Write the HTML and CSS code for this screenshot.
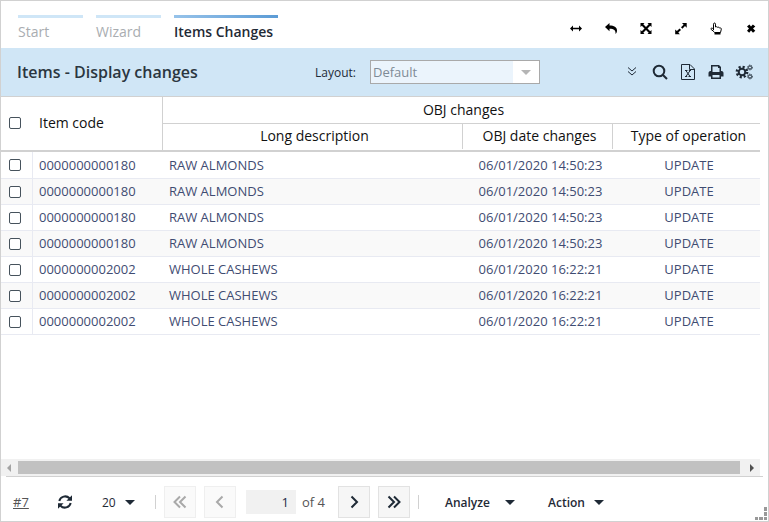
FILE: index.html
```html
<!DOCTYPE html>
<html lang="en">
<head>
<meta charset="utf-8">
<title>Items Changes</title>
<link rel="stylesheet" href="styles.css">
</head>
<body>
<main class="window">
  <header class="topbar">
    <nav class="tabs">
      <a class="tab" href="#start">Start</a>
      <a class="tab" href="#wizard">Wizard</a>
      <a class="tab active" href="#items">Items Changes</a>
    </nav>
    <div class="window-tools">
      <button aria-label="Fit width"><svg width="14" height="14" viewBox="0 0 14 14"><path d="M1 6.500l3-3v2.300h6V3.500l3 3-3 3V7.200H4v2.300z"/></svg></button>
      <button aria-label="Back"><svg width="14" height="14" viewBox="0 0 14 14"><path d="M1 5L5.500 1v2.500C10 3.500 13 5 13 8.500c0 1.500-.5 2.700-1.500 3.500C12 8.500 10 6.700 5.500 6.700v2.500z"/></svg></button>
      <button aria-label="Maximize"><svg width="14" height="14" viewBox="0 0 14 14"><path d="M1.500 1h4L4.300 2.300 7 5l2.700-2.700L8.500 1h4v4l-1.300-1.200L8.500 6.500l2.700 2.700 1.300-1.200v4h-4l1.200-1.300L7 8l-2.700 2.700L5.500 12h-4V8l1.300 1.200 2.700-2.700-2.700-2.700L1.500 5z"/></svg></button>
      <button aria-label="Expand"><svg width="14" height="14" viewBox="0 0 14 14"><path d="M8 1h4.700v4.700L11 4.100 8.400 6.700 7 5.300l2.600-2.600zM1.200 12.200V7.500l1.700 1.600 2.700-2.600L7 7.900l-2.700 2.600 1.600 1.700z"/></svg></button>
      <button aria-label="Pointer"><svg class="line" width="14" height="14" viewBox="0 0 14 14"><path d="M4.500 8V2.200c0-1.600 2-1.600 2 0V5c1.400-.6 2-.1 2.200.4 1-.5 1.600 0 1.800.6 1.200-.4 1.800.2 1.800 1.200 0 1.400-.8 2.200-.8 3.300H5.600C5.200 9.500 2.900 8.200 2.100 7.400 1.400 6 3 5.600 4.500 7"/><path d="M5.500 11.500h6" stroke-width="2"/></svg></button>
      <button aria-label="Close"><svg width="14" height="14" viewBox="0 0 14 14"><path d="M3 4.400L5.400 2.500 7 4.600 8.900 2.500 11.300 4.400 9 6.500 11.300 8.700 9 10.800 7 8.600 5.200 10.800 3 8.700 5 6.500z"/></svg></button>
    </div>
  </header>

  <section class="titlebar">
    <h1>Items - Display changes</h1>
    <label for="layout">Layout:</label>
    <div class="select-box">
      <select id="layout" disabled><option>Default</option></select>
      <span class="select-arrow"><i class="caret"></i></span>
    </div>
    <div class="tools">
      <button aria-label="More"><svg class="line" width="18" height="18" viewBox="0 0 18 18"><path d="M5 4.500L9 8l4-3.500M5 8.500L9 12l4-3.500"/></svg></button>
      <button aria-label="Search"><svg class="heavy" width="18" height="18" viewBox="0 0 18 18"><circle cx="8" cy="8" r="5.300"/><path d="M11.700 11.700l4.300 4.300"/></svg></button>
      <button aria-label="Export to spreadsheet"><svg class="line" width="18" height="18" viewBox="0 0 18 18"><path d="M2.500 1.500h8.500l4.500 4.500v10.500h-13zM10.500 1.500v5h5M6 7.500h2.500M9.800 7.500h2.200M6 13.500h2.200M9.500 13.500H12M6.800 7.500l4.300 6M11.200 7.500l-4.300 6"/></svg></button>
      <button aria-label="Print"><svg width="18" height="18" viewBox="0 0 18 18"><path fill-rule="evenodd" d="M4 2h8l2 2v4h.5C15.500 8 16.500 8.800 16.500 10v3.500H14V16H4v-2.500H1.500V10c0-1.200 1-2 2-2H4zM5.500 3.500V9h7V5H11V3.500zM5.500 12v2.500h7V12z"/></svg></button>
      <button aria-label="Settings"><svg class="gears" width="18" height="18" viewBox="0 0 18 18"><circle class="teeth" cx="7" cy="9" r="4.900"/><circle class="ring" cx="7" cy="9" r="3.300"/><circle class="small-teeth" cx="15" cy="4.500" r="2.400"/><circle class="small" cx="15" cy="4.500" r="1.600"/><circle class="small-teeth" cx="15" cy="13.500" r="2.400"/><circle class="small" cx="15" cy="13.500" r="1.600"/></svg></button>
    </div>
  </section>

  <section class="grid">
    <table>
      <colgroup><col class="c-check"><col class="c-code"><col><col class="c-date"><col class="c-type"></colgroup>
      <thead>
        <tr>
          <th class="check" rowspan="2"><input type="checkbox" aria-label="Select all"></th>
          <th class="code" rowspan="2">Item code</th>
          <th class="group" colspan="3">OBJ changes</th>
        </tr>
        <tr class="sub"><th><span>Long description</span></th><th><span>OBJ date changes</span></th><th><span>Type of operation</span></th></tr>
      </thead>
      <tbody>
        <tr><td class="check"><input type="checkbox" aria-label="Select row 1"></td><td>0000000000180</td><td>RAW ALMONDS</td><td class="mid">06/01/2020 14:50:23</td><td class="mid">UPDATE</td></tr>
        <tr><td class="check"><input type="checkbox" aria-label="Select row 2"></td><td>0000000000180</td><td>RAW ALMONDS</td><td class="mid">06/01/2020 14:50:23</td><td class="mid">UPDATE</td></tr>
        <tr><td class="check"><input type="checkbox" aria-label="Select row 3"></td><td>0000000000180</td><td>RAW ALMONDS</td><td class="mid">06/01/2020 14:50:23</td><td class="mid">UPDATE</td></tr>
        <tr><td class="check"><input type="checkbox" aria-label="Select row 4"></td><td>0000000000180</td><td>RAW ALMONDS</td><td class="mid">06/01/2020 14:50:23</td><td class="mid">UPDATE</td></tr>
        <tr><td class="check"><input type="checkbox" aria-label="Select row 5"></td><td>0000000002002</td><td>WHOLE CASHEWS</td><td class="mid">06/01/2020 16:22:21</td><td class="mid">UPDATE</td></tr>
        <tr><td class="check"><input type="checkbox" aria-label="Select row 6"></td><td>0000000002002</td><td>WHOLE CASHEWS</td><td class="mid">06/01/2020 16:22:21</td><td class="mid">UPDATE</td></tr>
        <tr><td class="check"><input type="checkbox" aria-label="Select row 7"></td><td>0000000002002</td><td>WHOLE CASHEWS</td><td class="mid">06/01/2020 16:22:21</td><td class="mid">UPDATE</td></tr>
      </tbody>
    </table>
  </section>

  <div class="scrollbar">
    <svg class="dim" width="17" height="17" viewBox="0 0 17 17"><path d="M10 5v8L6 9z"/></svg>
    <div class="thumb"></div>
    <svg width="20" height="17" viewBox="0 0 20 17"><path d="M10 5v8l4-4z"/></svg>
  </div>

  <footer class="pager">
    <a class="count" href="#rows">#7</a>
    <button class="refresh" aria-label="Refresh"><svg width="16" height="16" viewBox="0 0 16 16"><path class="arc" d="M2.300 7A6 6 0 0 1 12.500 4.300M13.700 9A6 6 0 0 1 3.500 11.700"/><path d="M15 1.200v5.600H9.400zM1 14.800V9.200h5.600z"/></svg></button>
    <button class="menu size">20<i class="caret"></i></button>
    <span class="sep"></span>
    <div class="pages">
      <button class="page" disabled aria-label="First page"><svg width="20" height="20" viewBox="0 0 20 20"><path d="M10 4.500L4.500 10l5.500 5.500M15.500 4.500L10 10l5.500 5.500"/></svg></button>
      <button class="page" disabled aria-label="Previous page"><svg width="20" height="20" viewBox="0 0 20 20"><path d="M12.500 4.500L7 10l5.500 5.500"/></svg></button>
      <div class="current"><input id="page" type="text" value="1"><label for="page">of 4</label></div>
      <button class="page" aria-label="Next page"><svg width="20" height="20" viewBox="0 0 20 20"><path d="M7.500 4.500L13 10l-5.500 5.500"/></svg></button>
      <button class="page" aria-label="Last page"><svg width="20" height="20" viewBox="0 0 20 20"><path d="M4.500 4.500L10 10l-5.500 5.500M10 4.500l5.500 5.500-5.500 5.500"/></svg></button>
    </div>
    <span class="sep"></span>
    <button class="menu analyze">Analyze<i class="caret"></i></button>
    <button class="menu action">Action<i class="caret"></i></button>
  </footer>
  <svg class="grip" width="14" height="14" viewBox="0 0 14 14"><path d="M10 0h3v4h-3zM10 5h3v4h-3zM10 10h3v3h-3zM5 10h4v3H5zM1 10h3v3H1z"/></svg>
</main>
</body>
</html>
```

FILE: styles.css
```css
* { box-sizing: border-box; }

body {
  margin: 0;
  font-family: "Open Sans", "Noto Sans", sans-serif;
  font-size: 13px;
  color: #1f2a36;
}

button {
  padding: 0;
  border: 0;
  background: none;
  font: inherit;
  color: inherit;
}

svg { display: block; fill: currentColor; }

.window {
  position: relative;
  display: flex;
  flex-direction: column;
  min-height: 100vh;
  border: 1px solid #d1d1d1;
  background: #fff;
}

.topbar {
  display: flex;
  justify-content: space-between;
  height: 47px;
  padding: 14px 10px 0 17px;
}

.tabs { display: flex; gap: 13px; }

.tab {
  min-width: 65px;
  height: 28px;
  border-top: 3px solid #cfe6f7;
  font-size: 14px;
  line-height: 28px;
  color: #a9adb1;
  text-decoration: none;
}

.tab.active {
  min-width: 104px;
  border-image: linear-gradient(90deg, #97c3ea, #5b9bd5) 1;
  font-weight: 600;
  color: #1f2a36;
}

.window-tools { display: flex; gap: 21px; height: 27px; align-items: center; color: #000; }

.line { fill: none; stroke: currentColor; stroke-width: 1; }
.heavy { fill: none; stroke: currentColor; stroke-width: 2; }

.titlebar {
  display: flex;
  align-items: center;
  height: 49px;
  padding: 0 15px 0 16px;
  border-bottom: 1px solid #d1d1d1;
  background: #d0e6f6;
}

.titlebar h1 {
  flex: 0 1 298px;
  margin: 0;
  font-size: 16px;
  font-weight: 600;
  color: #2b3640;
}

.titlebar label { font-size: 12px; margin-right: 14px; }

.select-box {
  display: flex;
  width: 170px;
  height: 24px;
  border: 1px solid #a9a9a9;
  background: #ebf4fc;
}

.select-box select {
  flex: 1;
  appearance: none;
  padding: 0 2px;
  border: 0;
  background: none;
  font: inherit;
  color: #7f8b96;
  opacity: 1;
}

.select-arrow {
  display: flex;
  align-items: center;
  justify-content: center;
  width: 26px;
  background: #fff;
  color: #b5b5b5;
}

.caret {
  border: 5px solid transparent;
  border-top-color: currentColor;
  border-bottom: 0;
}

.tools { display: flex; gap: 10px; margin-left: auto; }

.gears circle { fill: none; stroke: currentColor; }
.gears .teeth { stroke-width: 3; stroke-dasharray: 2 1.848; }
.gears .ring { stroke-width: 2; }
.gears .small-teeth { stroke-width: 1; stroke-dasharray: 1 .885; }
.gears .small { stroke-width: 1; }

.grid { flex: 1; padding-right: 8px; }

table {
  width: 100%;
  table-layout: fixed;
  border-spacing: 0;
}

.c-check { width: 32px; }
.c-code { width: 130px; }
.c-date { width: 150px; }
.c-type { width: 147px; }

th {
  padding: 0 0 0 4px;
  font-size: 14px;
  font-weight: 400;
  line-height: 20px;
  color: #111;
}

th.check, th.code { padding-bottom: 2px; border-bottom: 2px solid #d1d1d1; }
th.code { padding-left: 6px; border-right: 1px solid #d1d1d1; text-align: left; }
th.group { height: 27px; border-bottom: 1px solid #d1d1d1; }

.sub th { height: 28px; padding-bottom: 1px; border-bottom: 2px solid #d1d1d1; }
.sub span { display: block; padding: 1px 0 3px; border-right: 1px solid #d1d1d1; line-height: 21px; }
.sub th:last-child span { border-right: 0; }

td {
  height: 26px;
  padding: 0 6px 2px;
  border-bottom: 1px solid #e8eaf2;
  line-height: 20px;
  color: #3f4c72;
}

tbody tr:first-child td { height: 27px; padding-bottom: 0; }
tbody tr:nth-child(even) { background: #f9f9f9; }

.check, td.check { padding: 0 0 0 8px; text-align: left; }
td.check { border-right: 1px solid #e8eaf2; }
td.mid { padding-left: 11px; text-align: center; }

input[type="checkbox"] {
  display: block;
  appearance: none;
  width: 12px;
  height: 12px;
  margin: 0;
  border: 1px solid #46525c;
  border-radius: 2px;
  background: #fff;
}

.scrollbar {
  display: flex;
  height: 17px;
  margin-right: 8px;
  background: #f1f1f1;
  color: #505050;
}

.scrollbar .dim { color: #a3a3a3; }
.thumb { flex: 1; margin: 2px 0; background: #c1c1c1; }

.pager {
  display: flex;
  align-items: center;
  height: 45px;
  margin: 0 5px;
  padding: 6px 7px 0;
  border-top: 1px solid #d1d1d1;
  font-size: 12px;
}

.count { width: 44px; font-size: 13px; color: #555; }
.refresh { width: 45px; }
.arc { fill: none; stroke: currentColor; stroke-width: 2; }

.menu { display: flex; align-items: center; justify-content: space-between; font-weight: 600; }
.size { width: 33px; margin-right: 20px; font-weight: 500; }

.sep { width: 1px; height: 14px; background: #d1d1d1; }

.pages { display: flex; align-items: center; gap: 8px; padding: 0 8px; }

.page {
  display: grid;
  place-items: center;
  width: 32px;
  height: 32px;
  border: 1px solid #e2e2e2;
  background: #f6f6f6;
}

.page svg { fill: none; stroke: currentColor; stroke-width: 2; }
.page:disabled { border-color: #efefef; background: #fafafa; color: #a9a9a9; }

.current { display: flex; align-items: center; width: 84px; margin: 0 0 0 2px; gap: 6px; }
.current input {
  width: 50px;
  height: 24px;
  padding: 0 7px;
  border: 0;
  background: #f1f1f1;
  font: inherit;
  font-size: 13px;
  text-align: right;
  color: #1f2a4a;
}
.current label { font-size: 13px; color: #555; }

.analyze { width: 70px; margin-left: 26px; }
.action { width: 56px; margin-left: 33px; }

.grip { position: absolute; right: 0; bottom: 0; color: #999; }
```
